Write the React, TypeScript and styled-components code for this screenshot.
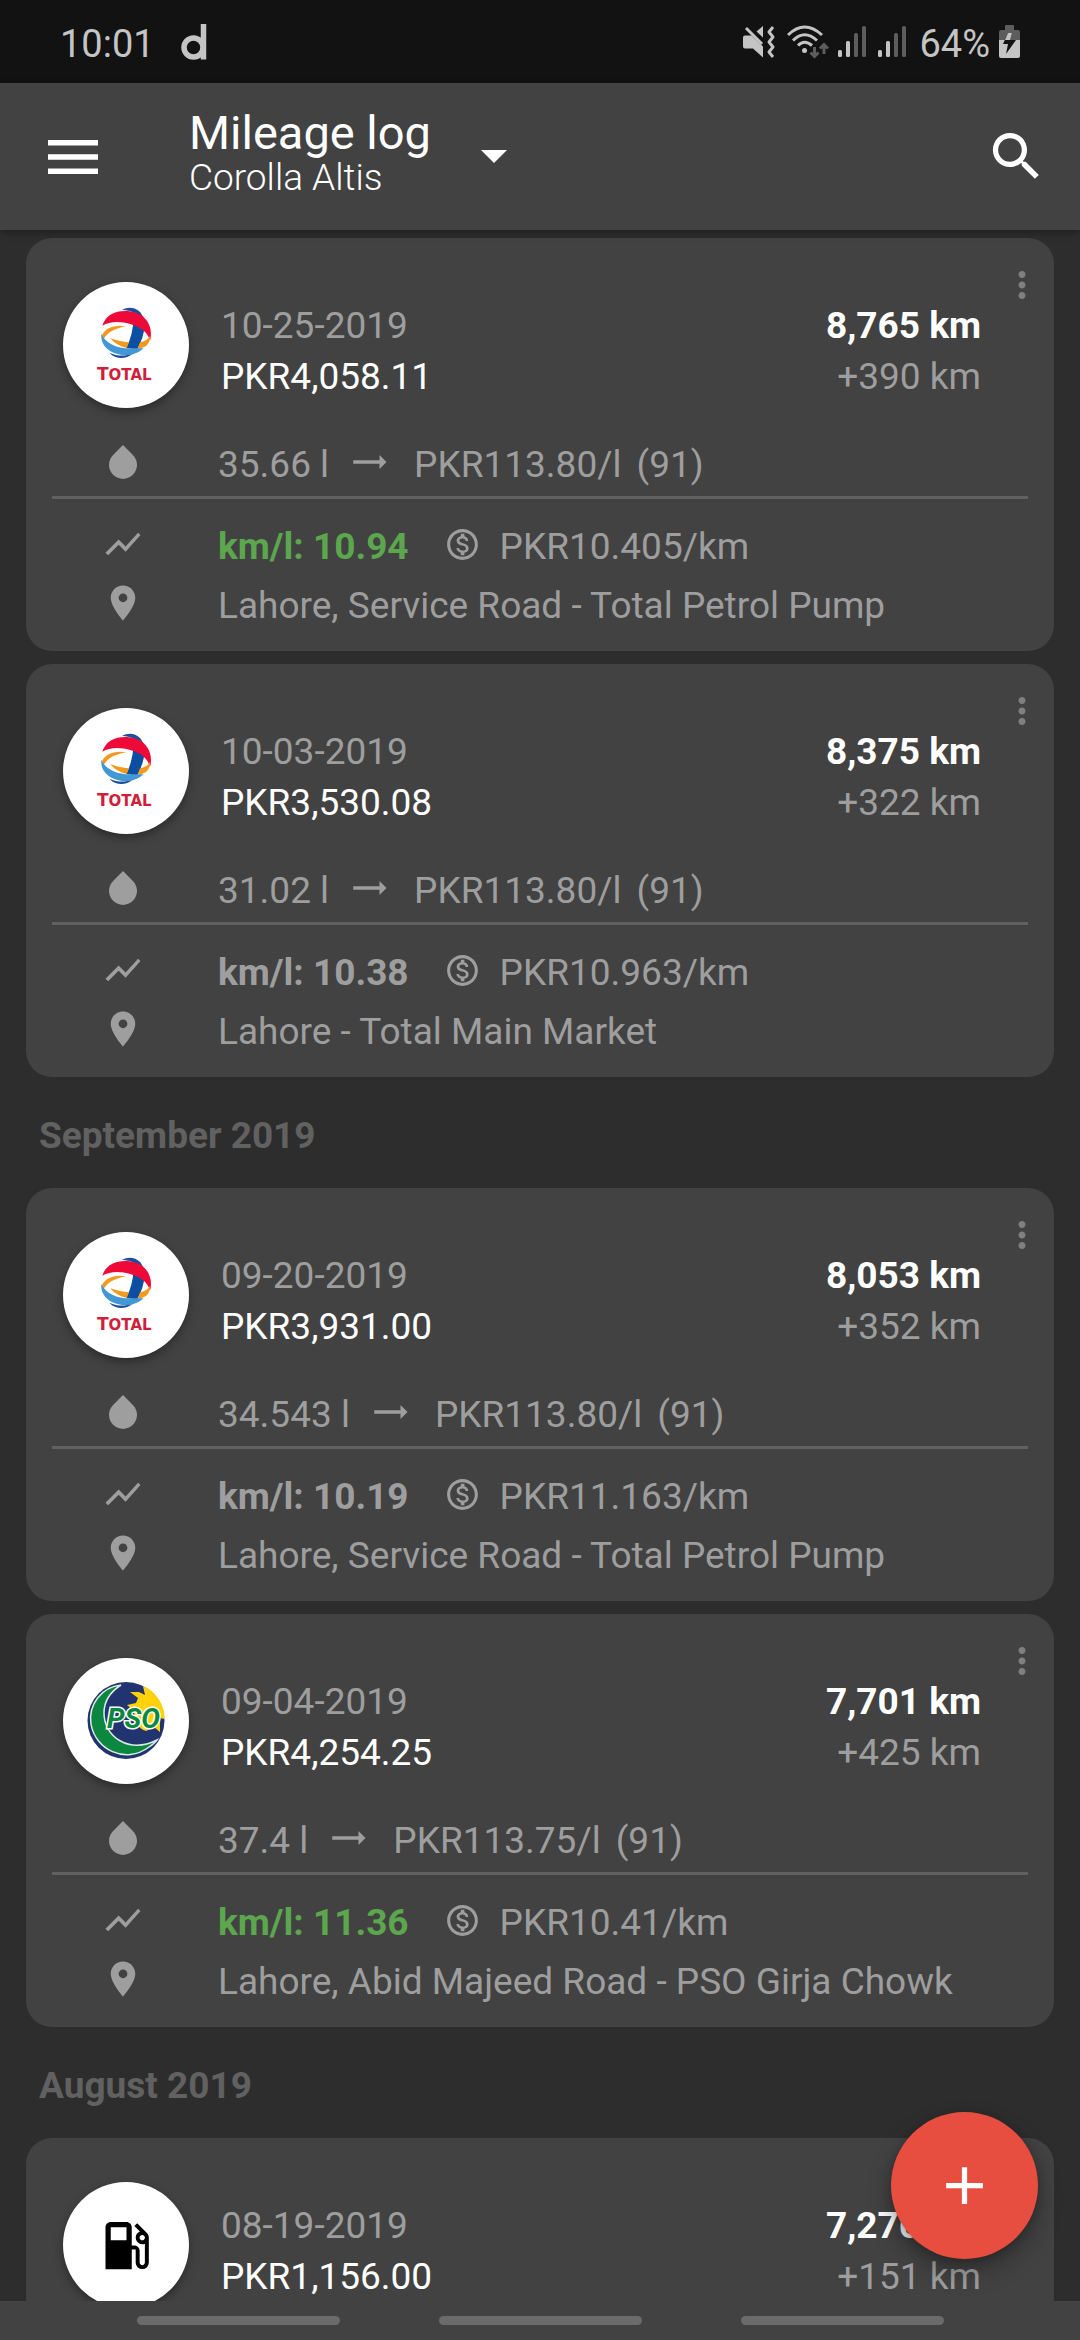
import React from "react";
import styled, { createGlobalStyle } from "styled-components";
import { MdAdd, MdLocalGasStation, MdMoreVert, MdOutlineMonetizationOn, MdPlace, MdSearch, MdShowChart, MdTrendingFlat } from "react-icons/md";

const GlobalStyle = createGlobalStyle`
  *, *::before, *::after { box-sizing: border-box; }
  html, body, #root { height: 100%; }
  body {
    margin: 0;
    background: #2d2d2d;
    color: #9e9e9e;
    font-family: Roboto, "Noto Sans", sans-serif;
    font-size: 37px;
  }
  button { margin: 0; padding: 0; border: 0; background: none; color: inherit; font: inherit; cursor: pointer; }
  h1, h2, p, ul { margin: 0; padding: 0; font-weight: inherit; font-size: inherit; }
  svg { display: block; flex: none; }
`;

const Screen = styled.div`
  position: relative;
  display: flex;
  flex-direction: column;
  height: 100vh;
  overflow: hidden;
`;

const StatusBar = styled.div`
  display: flex;
  align-items: center;
  justify-content: space-between;
  flex: none;
  height: 83px;
  padding: 0 60px;
  background: #121212;
  color: #c4c4c4;
  font-size: 38px;
`;

const StatusGroup = styled.div<{ $gap: number }>`
  display: flex;
  align-items: center;
  gap: ${(p) => p.$gap}px;
`;

const StatusText = styled.span`
  padding-top: 4px;
`;

const AppBar = styled.header`
  position: relative;
  z-index: 1;
  display: flex;
  align-items: center;
  flex: none;
  height: 147px;
  padding: 0 32px 0 48px;
  background: #424242;
  color: #fff;
  box-shadow: 0 2px 8px rgba(0, 0, 0, 0.35);
`;

const VehiclePicker = styled.button`
  display: flex;
  align-items: center;
  gap: 50px;
  margin-left: 91px;
  text-align: left;
`;

const Titles = styled.span`
  display: flex;
  flex-direction: column;
  padding-bottom: 5px;
`;

const Title = styled.span`
  font-size: 47px;
  line-height: 48px;
`;

const Subtitle = styled.span`
  font-weight: 300;
  line-height: 42px;
`;

const SearchButton = styled.button`
  margin-left: auto;
`;

const Log = styled.main`
  flex: 1;
  min-height: 0;
  overflow: hidden;
  padding: 8px 26px 0;
`;

const CardList = styled.ul`
  display: flex;
  flex-direction: column;
  gap: 13px;
  list-style: none;
`;

const Month = styled.h2`
  padding: 29px 13px 23px;
  color: #616161;
  font-weight: 700;
  line-height: 59px;
`;

const Card = styled.li`
  position: relative;
  padding: 44px 26px 21px;
  border-radius: 26px;
  background: #424242;
`;

const MoreButton = styled.button`
  position: absolute;
  top: 26px;
  right: 11px;
  color: #808080;
`;

const CardHead = styled.div`
  display: flex;
  padding: 0 47px 0 11px;
  margin-bottom: 33px;
`;

const Avatar = styled.div`
  display: grid;
  place-items: center;
  flex: none;
  width: 126px;
  height: 126px;
  border-radius: 50%;
  background: #fff;
  color: #000;
  box-shadow: 0 4px 10px rgba(0, 0, 0, 0.35);
`;

const HeadLines = styled.div<{ $end?: boolean }>`
  padding-top: 18px;
  line-height: 51px;
  ${(p) => (p.$end ? "margin-left: auto; text-align: right;" : "margin-left: 32px;")}
`;

const Strong = styled.p<{ $bold?: boolean }>`
  color: #fff;
  font-weight: ${(p) => (p.$bold ? 700 : 400)};
`;

const Row = styled.div`
  display: flex;
  padding-left: 50px;
  line-height: 48px;
  white-space: nowrap;
  & + & { margin-top: 11px; }
`;

const IconCell = styled.span<{ $before?: number; $after: number }>`
  display: flex;
  align-items: center;
  height: 42px;
  margin-left: ${(p) => p.$before ?? 0}px;
  margin-right: ${(p) => p.$after}px;
`;

const Octane = styled.span`
  margin-left: 15px;
`;

const Divider = styled.hr`
  height: 3px;
  margin: 7px 0 24px;
  border: 0;
  background: #616161;
`;

const Economy = styled.span<{ $best?: boolean }>`
  color: ${(p) => (p.$best ? "#5ca64d" : "inherit")};
  font-weight: 700;
`;

const Fab = styled.button`
  position: absolute;
  right: 42px;
  bottom: 81px;
  z-index: 2;
  display: grid;
  place-items: center;
  width: 147px;
  height: 147px;
  border-radius: 50%;
  background: #e84e40;
  color: #fff;
  box-shadow: 0 12px 24px rgba(0, 0, 0, 0.3), 0 2px 8px rgba(0, 0, 0, 0.2);
`;

const NavBar = styled.nav`
  display: flex;
  justify-content: center;
  align-items: center;
  gap: 99px;
  flex: none;
  height: 39px;
  background: #424242;
`;

const NavPill = styled.button`
  width: 203px;
  height: 9px;
  border-radius: 5px;
  background: #6b6b6b;
`;

const TotalLogo = () => (
  <svg width="126" height="126" viewBox="0 0 126 126" role="img" aria-label="Total">
    <g transform="translate(22 3) scale(0.3333)">
      <path d="M111 74Q142 60 166 82L176 98Q150 78 111 74Z" fill="#1c4f9c" />
      <path d="M146 100L180 118Q176 160 156 194L124 188Q144 150 146 100Z" fill="#0b4ea2" />
      <path d="M52 122C64 80 112 70 154 83C194 98 204 138 195 168C189 142 166 126 138 118C106 108 76 108 52 122Z" fill="#ee0a38" />
      <path d="M124 124C86 118 62 130 51 150L54 166C66 142 90 130 124 124Z" fill="#f39a1e" />
      <path d="M76 160C96 167 114 171 132 172L125 189C104 184 88 175 76 160Z" fill="#f39a1e" />
      <path d="M195 153C195 178 182 189 158 191L165 172C178 170 188 164 195 153Z" fill="#f39a1e" />
      <path d="M49 146C62 176 96 190 134 190L176 190C156 208 128 215 100 208C64 198 46 176 49 146Z" fill="#4497d5" />
      <path d="M73 203C96 213 118 214 142 207C122 224 92 224 73 203Z" fill="#1c4f9c" />
    </g>
    <text x="34" y="98" fill="#d01f3c" fontFamily="'DejaVu Sans', sans-serif" fontSize="17" fontWeight="700">
      T<tspan fontSize="15">OTAL</tspan>
    </text>
  </svg>
);

const PsoLogo = () => (
  <svg width="126" height="126" viewBox="0 0 126 126" role="img" aria-label="PSO">
    <circle cx="63" cy="62.5" r="38.5" fill="#21346f" />
    <path d="M80 28C94 34 102 48 101.500 61L97 60L97 74L91 69L83 73C74 70 71 62 71 53L64 47L73 45L75 40L67 34L76 34L82 37Z" fill="#ffd20a" />
    <path d="M58 27C39 29 25 46 28 66C32 91 62 107 86 89C92 85 94 82 94 82C66 96 41 79 41 55C41 43 47 34 58 27Z" fill="#0b8740" stroke="#dfe9e4" strokeWidth="1.5" />
    <text x="44" y="70" fill="#0b8740" stroke="#fff" strokeWidth="3" paintOrder="stroke" fontFamily="Roboto, sans-serif" fontSize="28" fontWeight="700" fontStyle="italic">PSO</text>
  </svg>
);

const DropIcon = () => (
  <svg width="42" height="42" viewBox="0 0 24 24" fill="currentColor" aria-hidden="true">
    <path d="M17.66 8L12 2.350 6.340 8C4.780 9.560 4 11.640 4 13.640s.78 4.110 2.340 5.670 3.610 2.350 5.660 2.350 4.100-.79 5.660-2.350S20 15.640 20 13.640 19.220 9.560 17.660 8z" />
  </svg>
);

const MuteIcon = () => (
  <svg width="32" height="32" viewBox="0 0 32 32" fill="currentColor" aria-hidden="true">
    <path d="M0 11.500Q0 9.500 2 9.500H8.500L20 20.500V31.500L10 22.500H2Q0 22.500 0 20.500Z" />
    <path d="M13.500 5.500L20 0V11.500Z" />
    <path d="M3 2L19 18" stroke="currentColor" strokeWidth="3" />
    <path d="M30 1L26 6L30 11L26 16L30 21L26 26L30 31" fill="none" stroke="currentColor" strokeWidth="3" strokeLinejoin="round" />
  </svg>
);

const WifiIcon = () => (
  <svg width="42" height="34" viewBox="0 0 42 34" fill="none" stroke="currentColor" strokeWidth="3" aria-hidden="true">
    <path d="M1 10Q17.500 -6 35 10M6 15.500Q17.500 4 30 15.500M11 20.500Q17.500 14 25 20.500" />
    <circle cx="17.5" cy="25.500" r="2.500" fill="currentColor" stroke="none" />
    <path d="M27.500 22V31M23.500 27.500L27.500 31.500L31.500 27.500M37 29V20M33 23.500L37 19.500L41 23.500" stroke="#5d5d5d" />
  </svg>
);

const SignalIcon = () => (
  <svg width="28" height="32" viewBox="0 0 28 32" aria-hidden="true">
    <rect x="0" y="24" width="4" height="7" rx="1.5" fill="currentColor" />
    <rect x="8" y="15" width="4" height="16" rx="1.5" fill="currentColor" />
    <rect x="16" y="7" width="4" height="24" rx="1.5" fill="#5d5d5d" />
    <rect x="24" y="0" width="4" height="31" rx="1.5" fill="#5d5d5d" />
  </svg>
);

const BatteryIcon = () => (
  <svg width="21" height="33" viewBox="0 0 21 33" aria-hidden="true">
    <path d="M6 1Q6 0 7 0H14Q15 0 15 1V5H19Q21 5 21 7V15H0V7Q0 5 2 5H6Z" fill="#5d5d5d" />
    <path d="M0 15H21V31Q21 33 19 33H2Q0 33 0 31Z" fill="currentColor" />
    <path d="M9 8H13L11 15H17L7 29L9 19H4Z" fill="#121212" />
    <path d="M9 8H13L11 15H6Z" fill="currentColor" />
  </svg>
);

type Details = {
  volume: string;
  price: string;
  octane: string;
  economy: string;
  best?: boolean;
  perKm: string;
  place: string;
};

type Entry = {
  date: string;
  cost: string;
  odometer: string;
  trip: string;
  brand: "total" | "pso" | "none";
  details?: Details;
};

const groups: { month?: string; entries: Entry[] }[] = [
  {
    entries: [
      {
        date: "10-25-2019", cost: "PKR4,058.11", odometer: "8,765 km", trip: "+390 km", brand: "total",
        details: { volume: "35.66 l", price: "PKR113.80/l", octane: "(91)", economy: "km/l: 10.94", best: true, perKm: "PKR10.405/km", place: "Lahore, Service Road - Total Petrol Pump" },
      },
      {
        date: "10-03-2019", cost: "PKR3,530.08", odometer: "8,375 km", trip: "+322 km", brand: "total",
        details: { volume: "31.02 l", price: "PKR113.80/l", octane: "(91)", economy: "km/l: 10.38", perKm: "PKR10.963/km", place: "Lahore - Total Main Market" },
      },
    ],
  },
  {
    month: "September 2019",
    entries: [
      {
        date: "09-20-2019", cost: "PKR3,931.00", odometer: "8,053 km", trip: "+352 km", brand: "total",
        details: { volume: "34.543 l", price: "PKR113.80/l", octane: "(91)", economy: "km/l: 10.19", perKm: "PKR11.163/km", place: "Lahore, Service Road - Total Petrol Pump" },
      },
      {
        date: "09-04-2019", cost: "PKR4,254.25", odometer: "7,701 km", trip: "+425 km", brand: "pso",
        details: { volume: "37.4 l", price: "PKR113.75/l", octane: "(91)", economy: "km/l: 11.36", best: true, perKm: "PKR10.41/km", place: "Lahore, Abid Majeed Road - PSO Girja Chowk" },
      },
    ],
  },
  {
    month: "August 2019",
    entries: [
      { date: "08-19-2019", cost: "PKR1,156.00", odometer: "7,276 km", trip: "+151 km", brand: "none" },
    ],
  },
];

const brandIcons = {
  total: <TotalLogo />,
  pso: <PsoLogo />,
  none: <MdLocalGasStation size={63} />,
};

const FillUpDetails = ({ details }: { details: Details }) => (
  <>
    <Row>
      <IconCell $after={74}><DropIcon /></IconCell>
      <span>{details.volume}</span>
      <IconCell $before={19} $after={24}><MdTrendingFlat size={42} /></IconCell>
      <span>{details.price}</span>
      <Octane>{details.octane}</Octane>
    </Row>
    <Divider />
    <Row>
      <IconCell $after={74}><MdShowChart size={42} /></IconCell>
      <Economy $best={details.best}>{details.economy}</Economy>
      <IconCell $before={35} $after={19}><MdOutlineMonetizationOn size={37} /></IconCell>
      <span>{details.perKm}</span>
    </Row>
    <Row>
      <IconCell $after={74}><MdPlace size={42} /></IconCell>
      <span>{details.place}</span>
    </Row>
  </>
);

const FillUp = ({ entry }: { entry: Entry }) => (
  <Card>
    <MoreButton type="button" aria-label={`Options for ${entry.date}`}>
      <MdMoreVert size={42} />
    </MoreButton>
    <CardHead>
      <Avatar>{brandIcons[entry.brand]}</Avatar>
      <HeadLines>
        <p>{entry.date}</p>
        <Strong>{entry.cost}</Strong>
      </HeadLines>
      <HeadLines $end>
        <Strong $bold>{entry.odometer}</Strong>
        <p>{entry.trip}</p>
      </HeadLines>
    </CardHead>
    {entry.details && <FillUpDetails details={entry.details} />}
  </Card>
);

export default function App() {
  return (
    <Screen>
      <GlobalStyle />
      <StatusBar>
        <StatusGroup $gap={26}>
          <StatusText>10:01</StatusText>
          <svg width="26" height="36" viewBox="0 0 26 36" fill="none" stroke="currentColor" strokeWidth="5.5" aria-hidden="true">
            <circle cx="12.5" cy="23.5" r="9.5" />
            <path d="M22.500 0V35.500" />
          </svg>
        </StatusGroup>
        <StatusGroup $gap={13}>
          <StatusGroup $gap={12}>
            <MuteIcon />
            <StatusGroup $gap={9}>
              <WifiIcon />
              <SignalIcon />
            </StatusGroup>
            <SignalIcon />
          </StatusGroup>
          <StatusGroup $gap={9}>
            <StatusText>64%</StatusText>
            <BatteryIcon />
          </StatusGroup>
        </StatusGroup>
      </StatusBar>
      <AppBar>
        <button type="button" aria-label="Open menu">
          <svg width="50" height="34" viewBox="0 0 50 34" fill="currentColor" aria-hidden="true">
            <path d="M0 0H50V5.500H0ZM0 14.250H50V19.750H0ZM0 28.500H50V34H0Z" />
          </svg>
        </button>
        <VehiclePicker type="button">
          <Titles>
            <Title>Mileage log</Title>
            <Subtitle>Corolla Altis</Subtitle>
          </Titles>
          <svg width="26" height="13" viewBox="0 0 26 13" fill="currentColor" aria-hidden="true">
            <path d="M0 0H26L13 13Z" />
          </svg>
        </VehiclePicker>
        <SearchButton type="button" aria-label="Search">
          <MdSearch size={63} />
        </SearchButton>
      </AppBar>
      <Log>
        {groups.map((group) => (
          <section key={group.month ?? "latest"}>
            {group.month && <Month>{group.month}</Month>}
            <CardList>
              {group.entries.map((entry) => (
                <FillUp key={entry.date} entry={entry} />
              ))}
            </CardList>
          </section>
        ))}
      </Log>
      <Fab type="button" aria-label="Add fill-up">
        <MdAdd size={63} />
      </Fab>
      <NavBar aria-label="System navigation">
        <NavPill type="button" aria-label="Recents" />
        <NavPill type="button" aria-label="Home" />
        <NavPill type="button" aria-label="Back" />
      </NavBar>
    </Screen>
  );
}
